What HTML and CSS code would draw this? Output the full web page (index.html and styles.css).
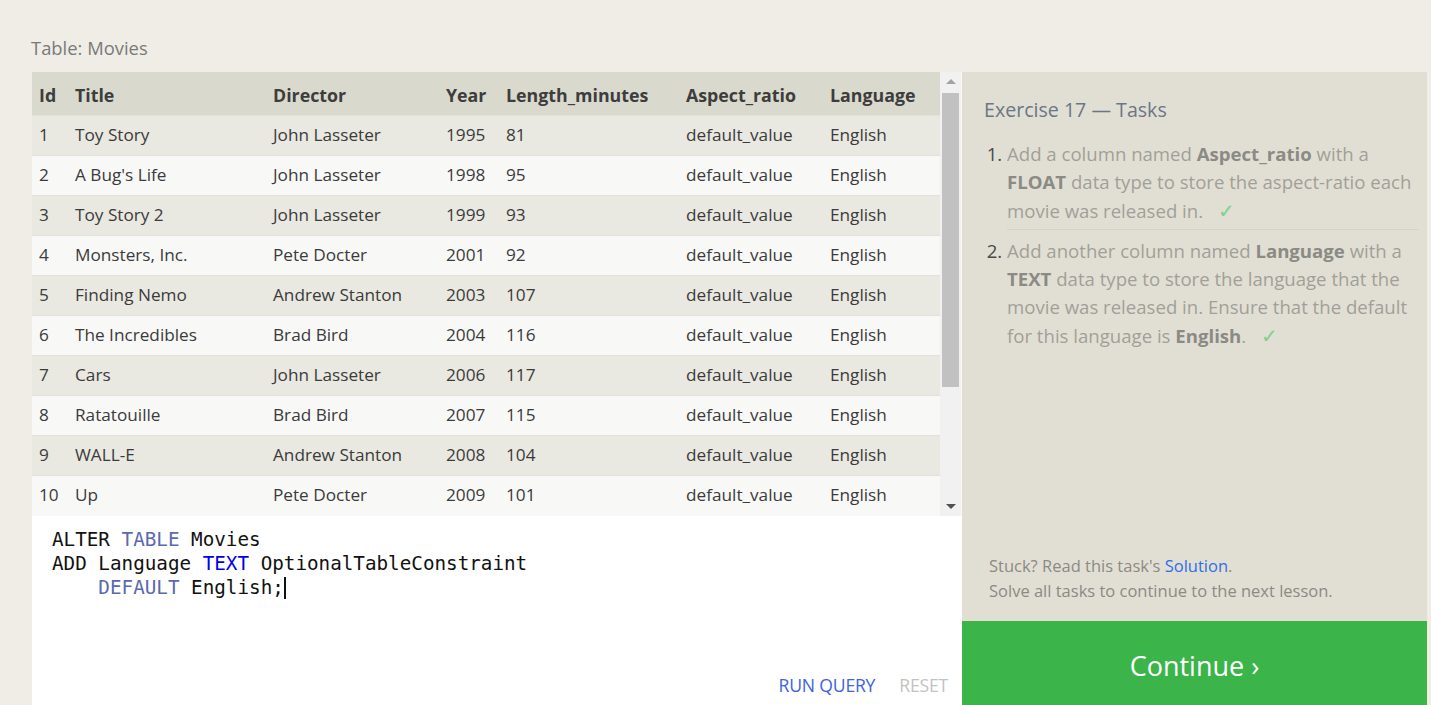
FILE: index.html
```html
<!DOCTYPE html>
<html>
<head>
<meta charset="utf-8">
<link rel="stylesheet" href="styles.css">
</head>
<body>
<div class="page">
  <div class="title-row">Table: Movies</div>
  <div class="main">
    <div class="left">
      <div class="table-area">
        <div class="table-clip">
          <table class="movies">
            <colgroup>
              <col class="c-id"><col class="c-title"><col class="c-dir"><col class="c-year"><col class="c-len"><col class="c-asp"><col class="c-lang">
            </colgroup>
            <thead>
              <tr><th>Id</th><th>Title</th><th>Director</th><th>Year</th><th>Length_minutes</th><th>Aspect_ratio</th><th>Language</th></tr>
            </thead>
            <tbody>
              <tr><td>1</td><td>Toy Story</td><td>John Lasseter</td><td>1995</td><td>81</td><td>default_value</td><td>English</td></tr>
              <tr><td>2</td><td>A Bug's Life</td><td>John Lasseter</td><td>1998</td><td>95</td><td>default_value</td><td>English</td></tr>
              <tr><td>3</td><td>Toy Story 2</td><td>John Lasseter</td><td>1999</td><td>93</td><td>default_value</td><td>English</td></tr>
              <tr><td>4</td><td>Monsters, Inc.</td><td>Pete Docter</td><td>2001</td><td>92</td><td>default_value</td><td>English</td></tr>
              <tr><td>5</td><td>Finding Nemo</td><td>Andrew Stanton</td><td>2003</td><td>107</td><td>default_value</td><td>English</td></tr>
              <tr><td>6</td><td>The Incredibles</td><td>Brad Bird</td><td>2004</td><td>116</td><td>default_value</td><td>English</td></tr>
              <tr><td>7</td><td>Cars</td><td>John Lasseter</td><td>2006</td><td>117</td><td>default_value</td><td>English</td></tr>
              <tr><td>8</td><td>Ratatouille</td><td>Brad Bird</td><td>2007</td><td>115</td><td>default_value</td><td>English</td></tr>
              <tr><td>9</td><td>WALL-E</td><td>Andrew Stanton</td><td>2008</td><td>104</td><td>default_value</td><td>English</td></tr>
              <tr><td>10</td><td>Up</td><td>Pete Docter</td><td>2009</td><td>101</td><td>default_value</td><td>English</td></tr>
            </tbody>
          </table>
        </div>
        <div class="scrollbar">
          <div class="arrow arrow-up"></div>
          <div class="track"><div class="thumb"></div></div>
          <div class="arrow arrow-down"></div>
        </div>
      </div>
      <div class="editor">
        <pre class="code"><span class="kw">ALTER</span> <span class="kw2">TABLE</span> Movies
<span class="kw">ADD</span> Language <span class="type">TEXT</span> OptionalTableConstraint
    <span class="kw2">DEFAULT</span> English;<span class="cursor"></span></pre>
        <div class="actions">
          <span class="btn run">RUN QUERY</span>
          <span class="btn reset">RESET</span>
        </div>
      </div>
    </div>
    <div class="right">
      <div class="tasks">
        <h2 class="tasks-title">Exercise 17 — Tasks</h2>
        <ol class="task-list">
          <li class="task">Add a column named <b>Aspect_ratio</b> with a <b>FLOAT</b> data type to store the aspect-ratio each movie was released in. <span class="check">✓</span></li>
          <li class="task">Add another column named <b>Language</b> with a <b>TEXT</b> data type to store the language that the movie was released in. Ensure that the default for this language is <b>English</b>. <span class="check">✓</span></li>
        </ol>
      </div>
      <div class="help">
        <div>Stuck? Read this task's <span class="link">Solution</span>.</div>
        <div>Solve all tasks to continue to the next lesson.</div>
      </div>
      <div class="continue">Continue ›</div>
    </div>
  </div>
</div>
</body>
</html>
```

FILE: styles.css
```css
* { box-sizing: border-box; }
html, body { margin: 0; padding: 0; }
body {
  background: #efede6;
  font-family: "Open Sans", "Noto Sans", sans-serif;
  width: 1431px;
  height: 705px;
  overflow: hidden;
}
.page {
  padding: 0 4px 0 32px;
  display: flex;
  flex-direction: column;
  height: 705px;
}
.title-row {
  height: 72px;
  padding-top: 35px;
  font-size: 18.4px;
  line-height: 26px;
  color: #7a7a7a;
  margin-left: -1px;
}
.main {
  display: flex;
  flex: 1;
  min-height: 0;
}
.left {
  width: 930px;
  display: flex;
  flex-direction: column;
}
.table-area {
  height: 444px;
  display: flex;
  background: #f8f8f7;
}
.table-clip {
  width: 908px;
  height: 444px;
  overflow: hidden;
}
.movies {
  width: 908px;
  table-layout: fixed;
  border-collapse: collapse;
  font-size: 17.2px;
  color: #3b3b3b;
}
.c-id { width: 36px; }
.c-title { width: 198px; }
.c-dir { width: 173px; }
.c-year { width: 60px; }
.c-len { width: 180px; }
.c-asp { width: 144px; }
.c-lang { width: 117px; }
.movies th {
  background: #dad9cd;
  height: 43px;
  text-align: left;
  font-weight: 700;
  font-size: 17.8px;
  padding: 3px 0 0 7px;
  color: #3d3d3d;
  white-space: nowrap;
}
.movies td {
  height: 40px;
  padding: 0 0 2px 7px;
  white-space: nowrap;
  border-top: 1px solid #e2e1da;
}
.movies tbody tr:nth-child(odd) td { background: #e9e8e1; }
.movies tbody tr:nth-child(even) td { background: #f8f8f7; }
.scrollbar {
  width: 21px;
  background: #f1f1f1;
  display: flex;
  flex-direction: column;
  align-items: center;
}
.arrow {
  height: 21px;
  width: 21px;
  position: relative;
  flex: none;
}
.arrow::after {
  content: "";
  position: absolute;
  left: 6px;
  width: 0; height: 0;
  border-left: 5px solid transparent;
  border-right: 5px solid transparent;
}
.arrow-up::after { top: 7px; border-bottom: 5px solid #a3a3a3; }
.arrow-down::after { top: 9px; border-top: 5px solid #505050; }
.track {
  flex: 1;
  width: 100%;
  padding: 0 2px;
}
.thumb {
  height: 294px;
  background: #c1c1c1;
}
.editor {
  flex: 1;
  background: #fff;
  display: flex;
  flex-direction: column;
}
.code {
  flex: 1;
  margin: 0;
  padding: 12px 0 0 20px;
  font-family: "DejaVu Sans Mono", "Liberation Mono", monospace;
  font-size: 19.25px;
  line-height: 24px;
  color: #111;
}
.kw { color: #111; }
.kw2 { color: #5a69b0; }
.type { color: #0000ee; }
.cursor {
  display: inline-block;
  width: 2px;
  height: 22px;
  background: #111;
  vertical-align: -5px;
}
.actions {
  display: flex;
  justify-content: flex-end;
  gap: 24px;
  padding: 0 14px 8px 0;
  font-size: 17.6px;
  line-height: 24px;
  letter-spacing: -0.2px;
}
.btn { text-transform: uppercase; }
.run { color: #3e62e0; }
.reset { color: #c2c2c2; }
.right {
  width: 465px;
  background: #e1dfd4;
  display: flex;
  flex-direction: column;
}
.tasks {
  flex: 1;
  padding: 24px 8px 0 22px;
}
.tasks-title {
  margin: 0;
  font-weight: 400;
  font-size: 19.6px;
  line-height: 28px;
  color: #6b7686;
}
.task-list {
  margin: 16px 0 0 0;
  padding: 0 0 0 23px;
  font-size: 18.6px;
  line-height: 28.3px;
  color: #a19f98;
}
.task-list li::marker { color: #4a4a4a; }
.task {
  padding: 0 3px 4px 0;
  border-bottom: 1px solid #d5d3c8;
}
.task + .task {
  padding-top: 7px;
  border-bottom: none;
}
.task b { color: #8b8a85; font-weight: 700; }
.check {
  color: #7fd28c;
  margin-left: 10px;
  font-size: 20px;
}
.help {
  padding: 0 0 18px 27px;
  font-size: 16.5px;
  line-height: 25px;
  color: #8c8a84;
}
.link { color: #2f6fe6; }
.continue {
  height: 84px;
  background: #3bb54a;
  color: #fff;
  font-size: 27px;
  display: flex;
  align-items: center;
  justify-content: center;
  padding-top: 4px;
}
```
